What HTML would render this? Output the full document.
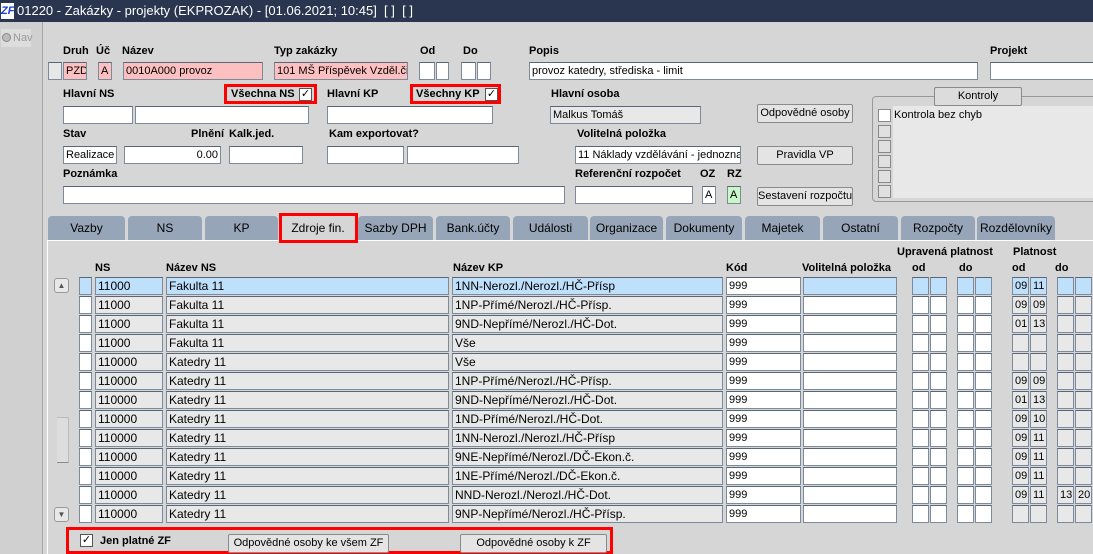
<!DOCTYPE html>
<html><head><meta charset="utf-8"><style>
*{box-sizing:border-box;margin:0;padding:0}
body{width:1093px;height:554px;overflow:hidden;background:#d6d6d6;font-family:"Liberation Sans",sans-serif;font-size:11px;color:#000;position:relative}
.a{position:absolute}
.t{position:absolute;background:#2a3650;color:#fff;left:0;top:0;width:1093px;height:22px;font-size:13px;line-height:22px;padding-left:17px}
.l{position:absolute;font-weight:bold;font-size:11px;white-space:nowrap}
.f{position:absolute;background:#fff;border:1px solid #7d8a9c;border-top-color:#5a6678;height:18px;font-size:11px;line-height:17px;padding-left:2px;white-space:nowrap;overflow:hidden}
.r{font-size:12px}
.p{background:#fdc0c0}
.g{background:#e8e8e8}
.b{position:absolute;background:#e4e4e4;border:1px solid #8a8a8a;border-radius:2px;font-size:11px;text-align:center;line-height:16px;height:19px;white-space:nowrap}
.tab{position:absolute;top:216px;height:24px;background:#97a5b8;border-radius:4px 4px 0 0;text-align:center;font-size:12px;line-height:24px}
.red{position:absolute;border:3px solid #f00}
.cb{position:absolute;width:13px;height:13px;background:#fff;border:1px solid #555;font-size:11px;line-height:10px;text-align:center}
</style></head><body>
<div class="t">01220 - Zakázky - projekty (EKPROZAK) - [01.06.2021; 10:45]&nbsp; [ ]&nbsp; [ ]</div>
<div class="a" style="left:1px;top:3px;width:13px;height:16px;background:#fff;color:#1a3fd0;font-weight:bold;font-style:italic;font-size:11px;line-height:16px">ZF</div>
<div class="a" style="left:0;top:22px;width:43px;height:532px;background:#d0d0d0;border-right:1px solid #a8a8a8"></div>
<div class="a" style="left:1px;top:29px;width:30px;height:18px;background:#ddd;color:#999;font-size:11px;line-height:18px;white-space:nowrap"><span style="display:inline-block;width:9px;height:9px;border-radius:50%;background:#bbb;border:1px solid #888;margin:0 2px 0 1px;vertical-align:-1px"></span>Nav</div>

<div class="l" style="left:63px;top:45px">Druh</div><div class="l" style="left:96px;top:45px">Úč</div><div class="l" style="left:122px;top:45px">Název</div>
<div class="l" style="left:274px;top:45px">Typ zakázky</div><div class="l" style="left:420px;top:45px">Od</div><div class="l" style="left:463px;top:45px">Do</div>
<div class="l" style="left:529px;top:45px">Popis</div><div class="l" style="left:990px;top:45px">Projekt</div>
<div class="f g" style="left:48px;top:62px;width:14px"></div>
<div class="f p" style="left:63px;top:62px;width:24px">PZD</div>
<div class="f p" style="left:98px;top:62px;width:14px">A</div>
<div class="f p" style="left:123px;top:62px;width:140px">0010A000 provoz</div>
<div class="f p" style="left:274px;top:62px;width:134px">101 MŠ Příspěvek Vzděl.činn</div>
<div class="f" style="left:419px;top:62px;width:16px"></div><div class="f" style="left:436px;top:62px;width:13px"></div>
<div class="f" style="left:461px;top:62px;width:15px"></div><div class="f" style="left:477px;top:62px;width:14px"></div>
<div class="f" style="left:529px;top:62px;width:449px">provoz katedry, střediska - limit</div>
<div class="f" style="left:990px;top:62px;width:110px"></div>

<div class="l" style="left:63px;top:88px">Hlavní NS</div>
<div class="red" style="left:224px;top:84px;width:93px;height:20px"></div>
<div class="l" style="left:231px;top:88px">Všechna NS</div><div class="cb" style="left:299px;top:88px">✓</div>
<div class="l" style="left:327px;top:88px">Hlavní KP</div>
<div class="red" style="left:410px;top:84px;width:91px;height:20px"></div>
<div class="l" style="left:416px;top:88px">Všechny KP</div><div class="cb" style="left:485px;top:88px">✓</div>
<div class="l" style="left:551px;top:88px">Hlavní osoba</div>
<div class="f" style="left:63px;top:106px;width:70px"></div>
<div class="f" style="left:135px;top:106px;width:174px"></div>
<div class="f" style="left:327px;top:106px;width:166px"></div>
<div class="f g" style="left:550px;top:106px;width:151px">Malkus Tomáš</div>
<div class="b" style="left:757px;top:104px;width:96px">Odpovědné osoby</div>

<div class="l" style="left:63px;top:128px">Stav</div><div class="l" style="left:191px;top:128px">Plnění</div><div class="l" style="left:229px;top:128px">Kalk.jed.</div>
<div class="l" style="left:329px;top:128px">Kam exportovat?</div><div class="l" style="left:577px;top:128px">Volitelná položka</div>
<div class="f" style="left:63px;top:146px;width:54px">Realizace</div>
<div class="f" style="left:124px;top:146px;width:97px;text-align:right;padding-right:2px">0.00</div>
<div class="f" style="left:229px;top:146px;width:74px"></div>
<div class="f" style="left:327px;top:146px;width:77px"></div>
<div class="f" style="left:407px;top:146px;width:112px"></div>
<div class="f" style="left:575px;top:146px;width:166px">11 Náklady vzdělávání - jednoznačn</div>
<div class="b" style="left:757px;top:146px;width:96px">Pravidla VP</div>

<div class="l" style="left:63px;top:168px">Poznámka</div><div class="l" style="left:575px;top:168px">Referenční rozpočet</div>
<div class="l" style="left:700px;top:168px">OZ</div><div class="l" style="left:727px;top:168px">RZ</div>
<div class="f" style="left:63px;top:186px;width:502px"></div>
<div class="f" style="left:575px;top:186px;width:118px"></div>
<div class="f" style="left:702px;top:186px;width:14px">A</div>
<div class="f" style="left:727px;top:186px;width:14px;background:#c8f7c8">A</div>
<div class="b" style="left:757px;top:187px;width:96px">Sestavení rozpočtu</div>

<div class="a" style="left:872px;top:96px;width:230px;height:106px;border:1px solid #999;border-radius:4px"></div>
<div class="b" style="left:934px;top:87px;width:88px;background:#dcdcdc">Kontroly</div>
<div class="a" style="left:893px;top:106px;width:200px;height:92px;background:#e8e8e8"></div>
<div class="cb" style="left:878px;top:109px;border-color:#888"></div><div class="a" style="left:894px;top:109px;font-size:11px">Kontrola bez chyb</div>
<div class="cb" style="left:878px;top:125px;background:#e0e0e0;border-color:#888"></div>
<div class="cb" style="left:878px;top:140px;background:#e0e0e0;border-color:#888"></div>
<div class="cb" style="left:878px;top:155px;background:#e0e0e0;border-color:#888"></div>
<div class="cb" style="left:878px;top:170px;background:#e0e0e0;border-color:#888"></div>
<div class="cb" style="left:878px;top:185px;background:#e0e0e0;border-color:#888"></div>

<div class="tab" style="left:48px;width:77px">Vazby</div>
<div class="tab" style="left:128px;width:74px">NS</div>
<div class="tab" style="left:205px;width:73px">KP</div>
<div class="tab" style="left:281px;width:74px;background:#d6d6d6;height:25px">Zdroje fin.</div>
<div class="tab" style="left:358px;width:75px">Sazby DPH</div>
<div class="tab" style="left:436px;width:74px">Bank.účty</div>
<div class="tab" style="left:513px;width:75px">Události</div>
<div class="tab" style="left:590px;width:73px">Organizace</div>
<div class="tab" style="left:666px;width:76px">Dokumenty</div>
<div class="tab" style="left:745px;width:75px">Majetek</div>
<div class="tab" style="left:823px;width:75px">Ostatní</div>
<div class="tab" style="left:901px;width:74px">Rozpočty</div>
<div class="tab" style="left:977px;width:78px">Rozdělovníky</div>
<div class="a" style="left:47px;top:240px;width:1046px;height:314px;border-left:1px solid #fff;border-top:1px solid #fff"></div>
<div class="red" style="left:279px;top:213px;width:79px;height:30px"></div>

<div class="l" style="left:95px;top:262px">NS</div><div class="l" style="left:166px;top:262px">Název NS</div>
<div class="l" style="left:453px;top:262px">Název KP</div><div class="l" style="left:726px;top:262px">Kód</div>
<div class="l" style="left:802px;top:262px">Volitelná položka</div>
<div class="l" style="left:897px;top:246px">Upravená platnost</div><div class="l" style="left:912px;top:262px">od</div><div class="l" style="left:959px;top:262px">do</div>
<div class="l" style="left:1013px;top:246px">Platnost</div><div class="l" style="left:1012px;top:262px">od</div><div class="l" style="left:1055px;top:262px">do</div>

<div class="a" style="left:54px;top:278px;width:15px;height:15px;border:1px solid #999;border-radius:3px;background:#e8e8e8;font-size:8px;text-align:center;line-height:13px;color:#555">▲</div>
<div class="a" style="left:57px;top:417px;width:12px;height:46px;border:1px solid #bbb;border-left:none;border-bottom:1px solid #889;background:#ddd"></div>
<div class="a" style="left:54px;top:507px;width:15px;height:15px;border:1px solid #999;border-radius:3px;background:#e8e8e8;font-size:8px;text-align:center;line-height:13px;color:#555">▼</div>

<div id="rows"></div>
<script>
var d=[["11000","Fakulta 11","1NN-Nerozl./Nerozl./HČ-Přísp","09","11","",""],
["11000","Fakulta 11","1NP-Přímé/Nerozl./HČ-Přísp.","09","09","",""],
["11000","Fakulta 11","9ND-Nepřímé/Nerozl./HČ-Dot.","01","13","",""],
["11000","Fakulta 11","Vše","","","",""],
["110000","Katedry 11","Vše","","","",""],
["110000","Katedry 11","1NP-Přímé/Nerozl./HČ-Přísp.","09","09","",""],
["110000","Katedry 11","9ND-Nepřímé/Nerozl./HČ-Dot.","01","13","",""],
["110000","Katedry 11","1ND-Přímé/Nerozl./HČ-Dot.","09","10","",""],
["110000","Katedry 11","1NN-Nerozl./Nerozl./HČ-Přísp","09","11","",""],
["110000","Katedry 11","9NE-Nepřímé/Nerozl./DČ-Ekon.č.","09","11","",""],
["110000","Katedry 11","1NE-Přímé/Nerozl./DČ-Ekon.č.","09","11","",""],
["110000","Katedry 11","NND-Nerozl./Nerozl./HČ-Dot.","09","11","13","20"],
["110000","Katedry 11","9NP-Nepřímé/Nerozl./HČ-Přísp.","","","",""]];
var h="";
d.forEach(function(r,i){var y=277+i*19;var s=i==0;var g=s?"#bfe0fb":"#e8e8e8";var w=s?"#bfe0fb":"#fff";
function c(x,wd,bg,t,big){h+='<div class="f'+(big?' r':'')+'" style="left:'+x+'px;top:'+y+'px;width:'+wd+'px;background:'+bg+'">'+(t||"")+'</div>';}
c(79,13,w);c(95,68,g,r[0],1);c(166,283,g,r[1],1);c(452,271,g,r[2],1);c(726,75,"#fff","999");c(803,94,w);
c(912,17,w);c(930,17,w);c(957,17,w);c(975,17,w);
c(1012,17,g,r[3]);c(1030,17,g,r[4]);c(1057,17,g,r[5]);c(1075,17,g,r[6]);});
document.getElementById("rows").innerHTML=h;
</script>

<div class="red" style="left:66px;top:527px;width:547px;height:27px"></div>
<div class="cb" style="left:80px;top:534px">✓</div>
<div class="l" style="left:100px;top:535px">Jen platné ZF</div>
<div class="b" style="left:228px;top:534px;width:161px">Odpovědné osoby ke všem ZF</div>
<div class="b" style="left:460px;top:534px;width:147px">Odpovědné osoby k ZF</div>
</body></html>
